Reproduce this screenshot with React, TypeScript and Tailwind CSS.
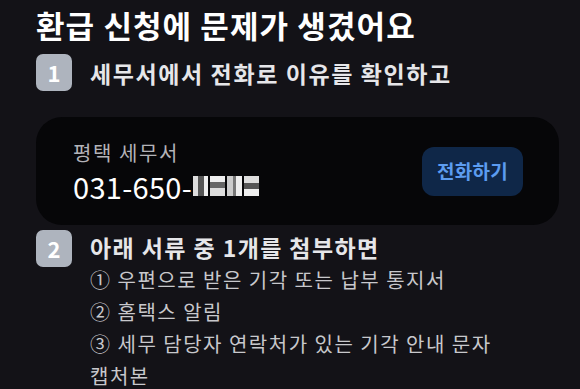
const font = { fontFamily: '"Noto Sans CJK KR", "Noto Sans", sans-serif' };

function StepBadge({ n }: { n: number }) {
  return (
    <div className="w-[36px] h-[37px] shrink-0 rounded-[7px] bg-[#aeb4be] flex items-center justify-center text-white text-[22px] font-bold">
      {n}
    </div>
  );
}

const docs = [
  '① 우편으로 받은 기각 또는 납부 통지서',
  '② 홈택스 알림',
  '③ 세무 담당자 연락처가 있는 기각 안내 문자 캡처본',
];

export default function App() {
  return (
    <div
      className="w-[580px] h-[389px] overflow-hidden bg-[#131217] pl-[36px] pr-[21px] pt-[3px]"
      style={font}
    >
      <h1 className="text-[31px] leading-[44px] font-bold text-white tracking-[1.1px]">
        환급 신청에 문제가 생겼어요
      </h1>

      <div className="mt-[7px] flex items-center gap-[18px]">
        <StepBadge n={1} />
        <p className="text-[23px] leading-[30px] font-semibold text-[#e6e6e9] tracking-[1.6px]">
          세무서에서 전화로 이유를 확인하고
        </p>
      </div>

      <div className="mt-[26px] h-[108px] rounded-[26px] bg-[#060608] flex items-center justify-between pl-[37px] pr-[36px]">
        <div className="flex flex-col">
          <span className="text-[20px] leading-[28px] text-[#b3b3b8] tracking-[1.6px]">평택 세무서</span>
          <span className="text-[29px] leading-[34px] text-white mt-[2px] flex items-center tracking-[0.3px]">
            031-650-
            <span className="inline-flex h-[20px] items-center gap-[2px] ml-[1px]">
              <span className="w-[15px] h-[20px] bg-[linear-gradient(90deg,#ddd_0_30%,#555_30%_70%,#eee_70%)]" />
              <span className="w-[15px] h-[20px] bg-[linear-gradient(180deg,#eee_0_30%,#666_30%_60%,#ddd_60%)]" />
              <span className="w-[15px] h-[20px] bg-[linear-gradient(90deg,#ccc_0_40%,#777_40%_60%,#eee_60%)]" />
              <span className="w-[15px] h-[20px] bg-[linear-gradient(180deg,#ddd_0_35%,#555_35%_65%,#eee_65%)]" />
            </span>
          </span>
        </div>
        <button className="w-[101px] h-[49px] rounded-[12px] bg-[#0f2748] text-[#5c9cf0] text-[19px] font-semibold tracking-[0.3px]">
          전화하기
        </button>
      </div>

      <div className="mt-[5px] flex items-start gap-[18px]">
        <StepBadge n={2} />
        <div className="flex-1 max-w-[430px]">
          <p className="text-[23px] leading-[34px] font-semibold text-[#e6e6e9] tracking-[1.4px]">
            아래 서류 중 1개를 첨부하면
          </p>
          <div className="text-[20px] leading-[32px] text-[#c8c8cc] tracking-[1.5px] break-keep">
            {docs.map((d) => (
              <p key={d}>{d}</p>
            ))}
          </div>
        </div>
      </div>
    </div>
  );
}
